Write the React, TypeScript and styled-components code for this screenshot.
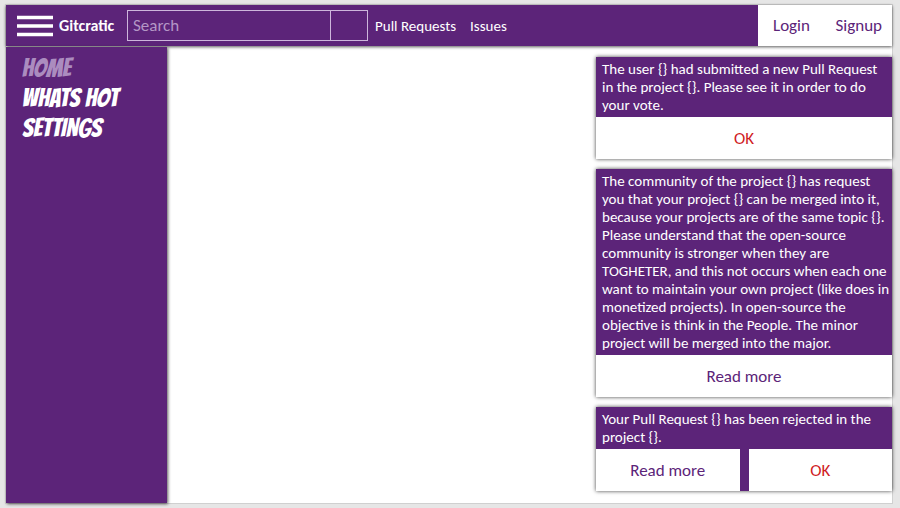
import React from "react";
import styled, { createGlobalStyle } from "styled-components";

const purple = "#5c2479";
const red = "#d01c1f";

const GlobalStyle = createGlobalStyle`
  * { box-sizing: border-box; }
  body {
    margin: 0;
    background: #e6e6e6;
    font-family: Carlito, Lato, "Noto Sans", sans-serif;
  }
  button, input { font-family: inherit; }
`;

const Page = styled.div`
  display: flex;
  flex-direction: column;
  min-height: 100vh;
  padding: 5px 8px 5px 6px;
`;

const Frame = styled.div`
  flex: 1;
  display: flex;
  flex-direction: column;
  background: #fff;
  box-shadow: 0 0 0 1px #d0d0d0;
`;

const Header = styled.header`
  display: flex;
  align-items: center;
  height: 41px;
  background: ${purple};
  box-shadow: 0 1px 3px rgba(0, 0, 0, 0.65);
`;

const MenuButton = styled.button`
  display: flex;
  margin-left: 11px;
  padding: 0;
  border: 0;
  background: none;
  cursor: pointer;
`;

const Brand = styled.strong`
  width: 74px;
  padding-left: 6px;
  color: #fff;
  font-size: 16px;
  font-weight: 700;
`;

const SearchForm = styled.form`
  display: flex;
  width: 241px;
  height: 31px;
  border: 1px solid #cdb6dc;
`;

const SearchInput = styled.input`
  flex: 1;
  min-width: 0;
  padding: 0 5px;
  border: 0;
  outline: 0;
  background: none;
  color: #fff;
  font-size: 17px;
  &::placeholder { color: #b497c6; opacity: 1; }
`;

const SearchButton = styled.button`
  width: 37px;
  border: 0;
  border-left: 1px solid #cdb6dc;
  background: none;
  cursor: pointer;
`;

const HeaderNav = styled.nav`
  flex: 1;
  display: flex;
  gap: 14px;
  padding-left: 7px;
`;

const HeaderLink = styled.a`
  color: #fff;
  font-size: 15px;
  text-decoration: none;
  white-space: nowrap;
`;

const Account = styled.div`
  display: flex;
  align-self: stretch;
  align-items: center;
  justify-content: space-between;
  width: 134px;
  padding: 0 10px 0 15px;
  background: #fff;
`;

const AccountLink = styled.a`
  color: ${purple};
  font-size: 17px;
  text-decoration: none;
`;

const Body = styled.div`
  flex: 1;
  display: flex;
  padding-top: 1px;
`;

const Sidebar = styled.nav`
  display: flex;
  flex-direction: column;
  width: 161px;
  padding: 6px 16px;
  background: ${purple};
  box-shadow: 1px 1px 3px rgba(0, 0, 0, 0.65);
`;

const SideLink = styled.a<{ $current?: boolean }>`
  color: ${(p) => (p.$current ? "#ab8cbf" : "#fff")};
  font-family: Bangers, "Liberation Sans Narrow", "Liberation Sans", sans-serif;
  font-size: 26px;
  font-style: oblique 6deg;
  line-height: 30px;
  text-decoration: none;
  text-transform: uppercase;
  white-space: nowrap;
`;

const Content = styled.main`
  flex: 1;
`;

const Notices = styled.aside`
  display: flex;
  flex-direction: column;
  gap: 10px;
  width: 296px;
  padding: 10px 0;
`;

const Card = styled.article`
  background: ${purple};
  box-shadow: 0 0 4px rgba(0, 0, 0, 0.75);
`;

const Message = styled.p`
  margin: 0;
  padding: 3px 0 3px 6px;
  color: #fff;
  font-size: 15px;
  line-height: 18px;
`;

const Actions = styled.div`
  display: flex;
  gap: 9px;
`;

const Action = styled.button<{ $accent?: boolean }>`
  flex: 1;
  height: 42px;
  padding: 0;
  border: 0;
  background: #fff;
  color: ${(p) => (p.$accent ? red : purple)};
  font-size: 17px;
  cursor: pointer;
`;

type Notice = { text: string; actions: string[] };

const notices: Notice[] = [
  {
    text: "The user {} had submitted a new Pull Request in the project {}. Please see it in order to do your vote.",
    actions: ["OK"],
  },
  {
    text: "The community of the project {} has request you that your project {} can be merged into it, because your projects are of the same topic {}. Please understand that the open-source community is stronger when they are TOGHETER, and this not occurs when each one want to maintain your own project (like does in monetized projects). In open-source the objective is think in the People. The minor project will be merged into the major.",
    actions: ["Read more"],
  },
  {
    text: "Your Pull Request {} has been rejected in the project {}.",
    actions: ["Read more", "OK"],
  },
];

export default function App() {
  return (
    <>
      <GlobalStyle />
      <Page>
        <Frame>
          <Header>
            <MenuButton aria-label="Menu">
              <svg width="36" height="22" viewBox="0 0 36 22" aria-hidden="true">
                <path d="M0 2.5h36M0 11h36M0 19.5h36" stroke="#fff" strokeWidth="3.4" />
              </svg>
            </MenuButton>
            <Brand>Gitcratic</Brand>
            <SearchForm onSubmit={(e) => e.preventDefault()}>
              <SearchInput type="text" placeholder="Search" aria-label="Search" />
              <SearchButton type="submit" aria-label="Submit search" />
            </SearchForm>
            <HeaderNav>
              <HeaderLink href="#pulls">Pull Requests</HeaderLink>
              <HeaderLink href="#issues">Issues</HeaderLink>
            </HeaderNav>
            <Account>
              <AccountLink href="#login">Login</AccountLink>
              <AccountLink href="#signup">Signup</AccountLink>
            </Account>
          </Header>
          <Body>
            <Sidebar>
              <SideLink href="#home" $current>Home</SideLink>
              <SideLink href="#hot">Whats hot</SideLink>
              <SideLink href="#settings">Settings</SideLink>
            </Sidebar>
            <Content />
            <Notices>
              {notices.map((notice) => (
                <Card key={notice.text}>
                  <Message>{notice.text}</Message>
                  <Actions>
                    {notice.actions.map((label) => (
                      <Action key={label} $accent={label === "OK"}>{label}</Action>
                    ))}
                  </Actions>
                </Card>
              ))}
            </Notices>
          </Body>
        </Frame>
      </Page>
    </>
  );
}
